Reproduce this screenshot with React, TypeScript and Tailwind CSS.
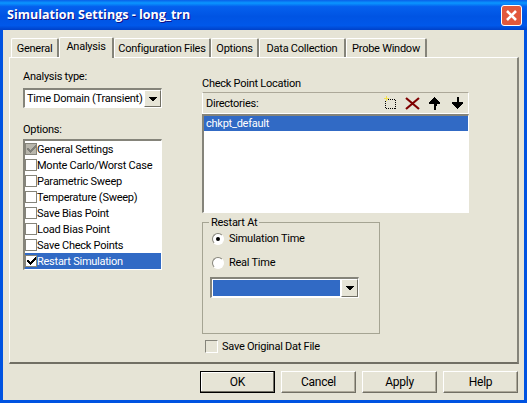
const tahoma = "font-['Roboto',Arial,sans-serif] text-[11px] leading-[13px] tracking-[-0.25px] text-black";

const tabs = [
  { label: "General", w: "w-[48px]" },
  { label: "Analysis", w: "w-[55px]", active: true },
  { label: "Configuration Files", w: "w-[97px]" },
  { label: "Options", w: "w-[48px]" },
  { label: "Data Collection", w: "w-[87px]" },
  { label: "Probe Window", w: "w-[81px]" },
];

const options = [
  "General Settings",
  "Monte Carlo/Worst Case",
  "Parametric Sweep",
  "Temperature (Sweep)",
  "Save Bias Point",
  "Load Bias Point",
  "Save Check Points",
  "Restart Simulation",
];

const sunken =
  "border-t-[2px] border-l-[2px] border-r-[1px] border-b-[1px] border-t-[#85847a] border-l-[#85847a] border-r-white border-b-white";

function Check({ color }: { color: string }) {
  return (
    <svg width="9" height="8" viewBox="0 0 9 8" shapeRendering="crispEdges">
      <path d="M0 3h2v1h1v1h1V4h1V3h1V2h1V1h1V0h1v3H8v1H7v1H6v1H5v1H4v1H3V7H2V6H1V5H0z" fill={color} />
    </svg>
  );
}

function Arrow() {
  return (
    <svg width="8" height="4" viewBox="0 0 8 4" shapeRendering="crispEdges">
      <path d="M0 0h8v1H7v1H6v1H5v1H3V3H2V2H1V1H0z" fill="#000" />
    </svg>
  );
}

function DropButton({ className }: { className: string }) {
  return (
    <div
      className={`flex shrink-0 items-center justify-center bg-[#e6e4d6] border border-t-white border-l-white border-r-[#716f64] border-b-[#716f64] ${className}`}
    >
      <Arrow />
    </div>
  );
}

function Radio({ on }: { on?: boolean }) {
  return (
    <span className="flex h-[12px] w-[12px] items-center justify-center rounded-full border border-t-[#85847a] border-l-[#85847a] border-r-white border-b-white bg-white">
      {on && <span className="h-[4px] w-[4px] rounded-full bg-black" />}
    </span>
  );
}

function Btn({ label, main }: { label: string; main?: boolean }) {
  return (
    <div
      className={`flex h-[22px] w-[75px] items-center justify-center bg-[#e6e4d6] text-[12px] ${
        main
          ? "border border-black shadow-[inset_-1px_-1px_0_#716f64,inset_1px_1px_0_#fff]"
          : "border border-t-white border-l-white border-r-[#716f64] border-b-[#716f64] shadow-[inset_-1px_-1px_0_#aca899]"
      }`}
    >
      {label}
    </div>
  );
}

function TitleBar() {
  return (
    <div className="flex h-[30px] shrink-0 items-center justify-between bg-[linear-gradient(180deg,#0a5fe8_0%,#0a97ff_10%,#0560ee_22%,#0054e3_55%,#0058ea_85%,#0041c8_100%)] pl-[7px] pr-[5px]">
      <span className="font-['Open_Sans',sans-serif] text-[12.5px] font-bold leading-[16px] tracking-normal text-white [text-shadow:1px_1px_0_#0f1089]">
        Simulation Settings - long_trn
      </span>
      <div className="flex h-[21px] w-[21px] items-center justify-center rounded-[3px] border border-white bg-[#e2583c]">
        <svg width="13" height="13" viewBox="0 0 13 13">
          <path d="M2 2 11 11M11 2 2 11" stroke="#fff" strokeWidth="2.6" />
        </svg>
      </div>
    </div>
  );
}

function Toolbar() {
  return (
    <div className="flex items-center gap-[8px]">
      <svg width="14" height="14" viewBox="0 0 14 14" shapeRendering="crispEdges">
        <rect x="2.5" y="3.5" width="10" height="9" fill="none" stroke="#000" strokeDasharray="1 1" />
        <path d="M1 2h5v1H1zM3 0h1v5H3z" fill="#f4e04a" />
      </svg>
      <svg width="15" height="13" viewBox="0 0 15 13">
        <path d="M1 1 14 12M14 1 1 12" stroke="#7f0000" strokeWidth="2.2" />
      </svg>
      <svg className="ml-[0px]" width="13" height="13" viewBox="0 0 13 13" shapeRendering="crispEdges">
        <path d="M6 0h1v1h1v1h1v1h1v1h1v1h1v2H9v2H8v4H6V7H1V5h1V4h1V3h1V2h1V1h1z" fill="#000" />
      </svg>
      <svg className="ml-[2px]" width="13" height="13" viewBox="0 0 13 13" shapeRendering="crispEdges">
        <path d="M6 0h2v5h4v2h-1v1h-1v1H9v1H8v1H7v1H6v-1H5v-1H4V9H3V8H2V7H1V5h5z" fill="#000" />
      </svg>
    </div>
  );
}

export default function App() {
  return (
    <div className={`flex h-[403px] w-[527px] flex-col overflow-hidden bg-[#0053e1] ${tahoma}`}>
      <TitleBar />
      <div className="ml-[3px] mr-[3px] mb-[3px] flex min-h-0 flex-1 flex-col bg-[#e6e4d6] bg-[radial-gradient(#efdcd2_0.6px,transparent_0.7px)] bg-[length:8px_8px] pl-[6px] pr-[5px] pt-[6px]">
        {/* tab strip */}
        <div className="relative z-10 flex h-[21px] items-end pl-[2px]">
          {tabs.map((t) => (
            <div
              key={t.label}
              className={`flex items-center justify-center rounded-t-[2px] border-t border-l border-t-white border-l-white border-r-[2px] border-r-[#85847a] bg-[#e6e4d6] ${t.w} ${
                t.active ? "-mb-[1px] h-[21px] pb-[3px]" : "h-[19px]"
              }`}
            >
              {t.label}
            </div>
          ))}
        </div>
        {/* tab pane */}
        <div className="flex h-[307px] gap-[40px] border-t border-l border-t-white border-l-white border-r-[2px] border-b-[2px] border-r-[#85847a] border-b-[#716f64] pl-[13px]">
          <div className="flex w-[139px] flex-col pt-[12px]">
            <span>Analysis type:</span>
            <div className={`mt-[5px] flex h-[20px] w-[139px] items-stretch bg-white ${sunken}`}>
              <span className="flex-1 whitespace-nowrap pl-[2px] pt-[2px]">Time Domain (Transient)</span>
              <DropButton className="w-[17px]" />
            </div>
            <span className="mt-[15px]">Options:</span>
            <div className={`mt-[3px] h-[131px] w-[139px] bg-white ${sunken}`}>
              {options.map((o, i) => {
                const sel = i === 7;
                return (
                  <div key={o} className={`flex h-[16px] items-center ${sel ? "bg-[#316ac5] text-white" : ""}`}>
                    <span
                      className={`flex h-[12px] w-[12px] shrink-0 items-center justify-center border border-[#85847a] ${
                        i === 0 ? "bg-[#b8b6ac]" : "bg-white"
                      }`}
                    >
                      {i === 0 && <Check color="#7f7f78" />}
                      {sel && <Check color="#000" />}
                    </span>
                    <span className="whitespace-nowrap">{o}</span>
                  </div>
                );
              })}
            </div>
          </div>

          <div className="flex w-[267px] flex-col pt-[19px]">
            <span>Check Point Location</span>
            <div className="mt-[2px] flex h-[22px] items-center justify-between border border-t-[#aca899] border-l-white border-r-white border-b-white pl-[3px] pr-[4px]">
              <span>Directories:</span>
              <Toolbar />
            </div>
            <div className={`h-[99px] bg-white ${sunken}`}>
              <div className="flex h-[15px] items-center bg-[#316ac5] pl-[2px] text-white">chkpt_default</div>
            </div>
            <div className="relative mt-[9px] h-[112px] w-[178px] border border-[#a5a493] pl-[7px] pt-[9px]">
              <span className="absolute -top-[7px] left-[6px] bg-[#e6e4d6] px-[2px]">Restart At</span>
              <div className="flex items-center gap-[5px] pl-[2px]">
                <Radio on />
                <span>Simulation Time</span>
              </div>
              <div className="mt-[11px] flex items-center gap-[5px] pl-[2px]">
                <Radio />
                <span>Real Time</span>
              </div>
              <div className={`mt-[8px] flex h-[21px] w-[149px] items-stretch bg-white ${sunken}`}>
                <div className="m-[1px] flex-1 bg-[#316ac5]" />
                <DropButton className="w-[17px]" />
              </div>
            </div>
            <div className="mt-[6px] flex items-center gap-[4px] pl-[3px]">
              <span className="h-[13px] w-[13px] border border-t-[#85847a] border-l-[#85847a] border-r-white border-b-white bg-[#e6e4d6]" />
              <span>Save Original Dat File</span>
            </div>
          </div>
        </div>
        {/* footer buttons */}
        <div className="mt-[7px] flex justify-end gap-[6px] pr-[1px]">
          <Btn label="OK" main />
          <Btn label="Cancel" />
          <Btn label="Apply" />
          <Btn label="Help" />
        </div>
      </div>
    </div>
  );
}
